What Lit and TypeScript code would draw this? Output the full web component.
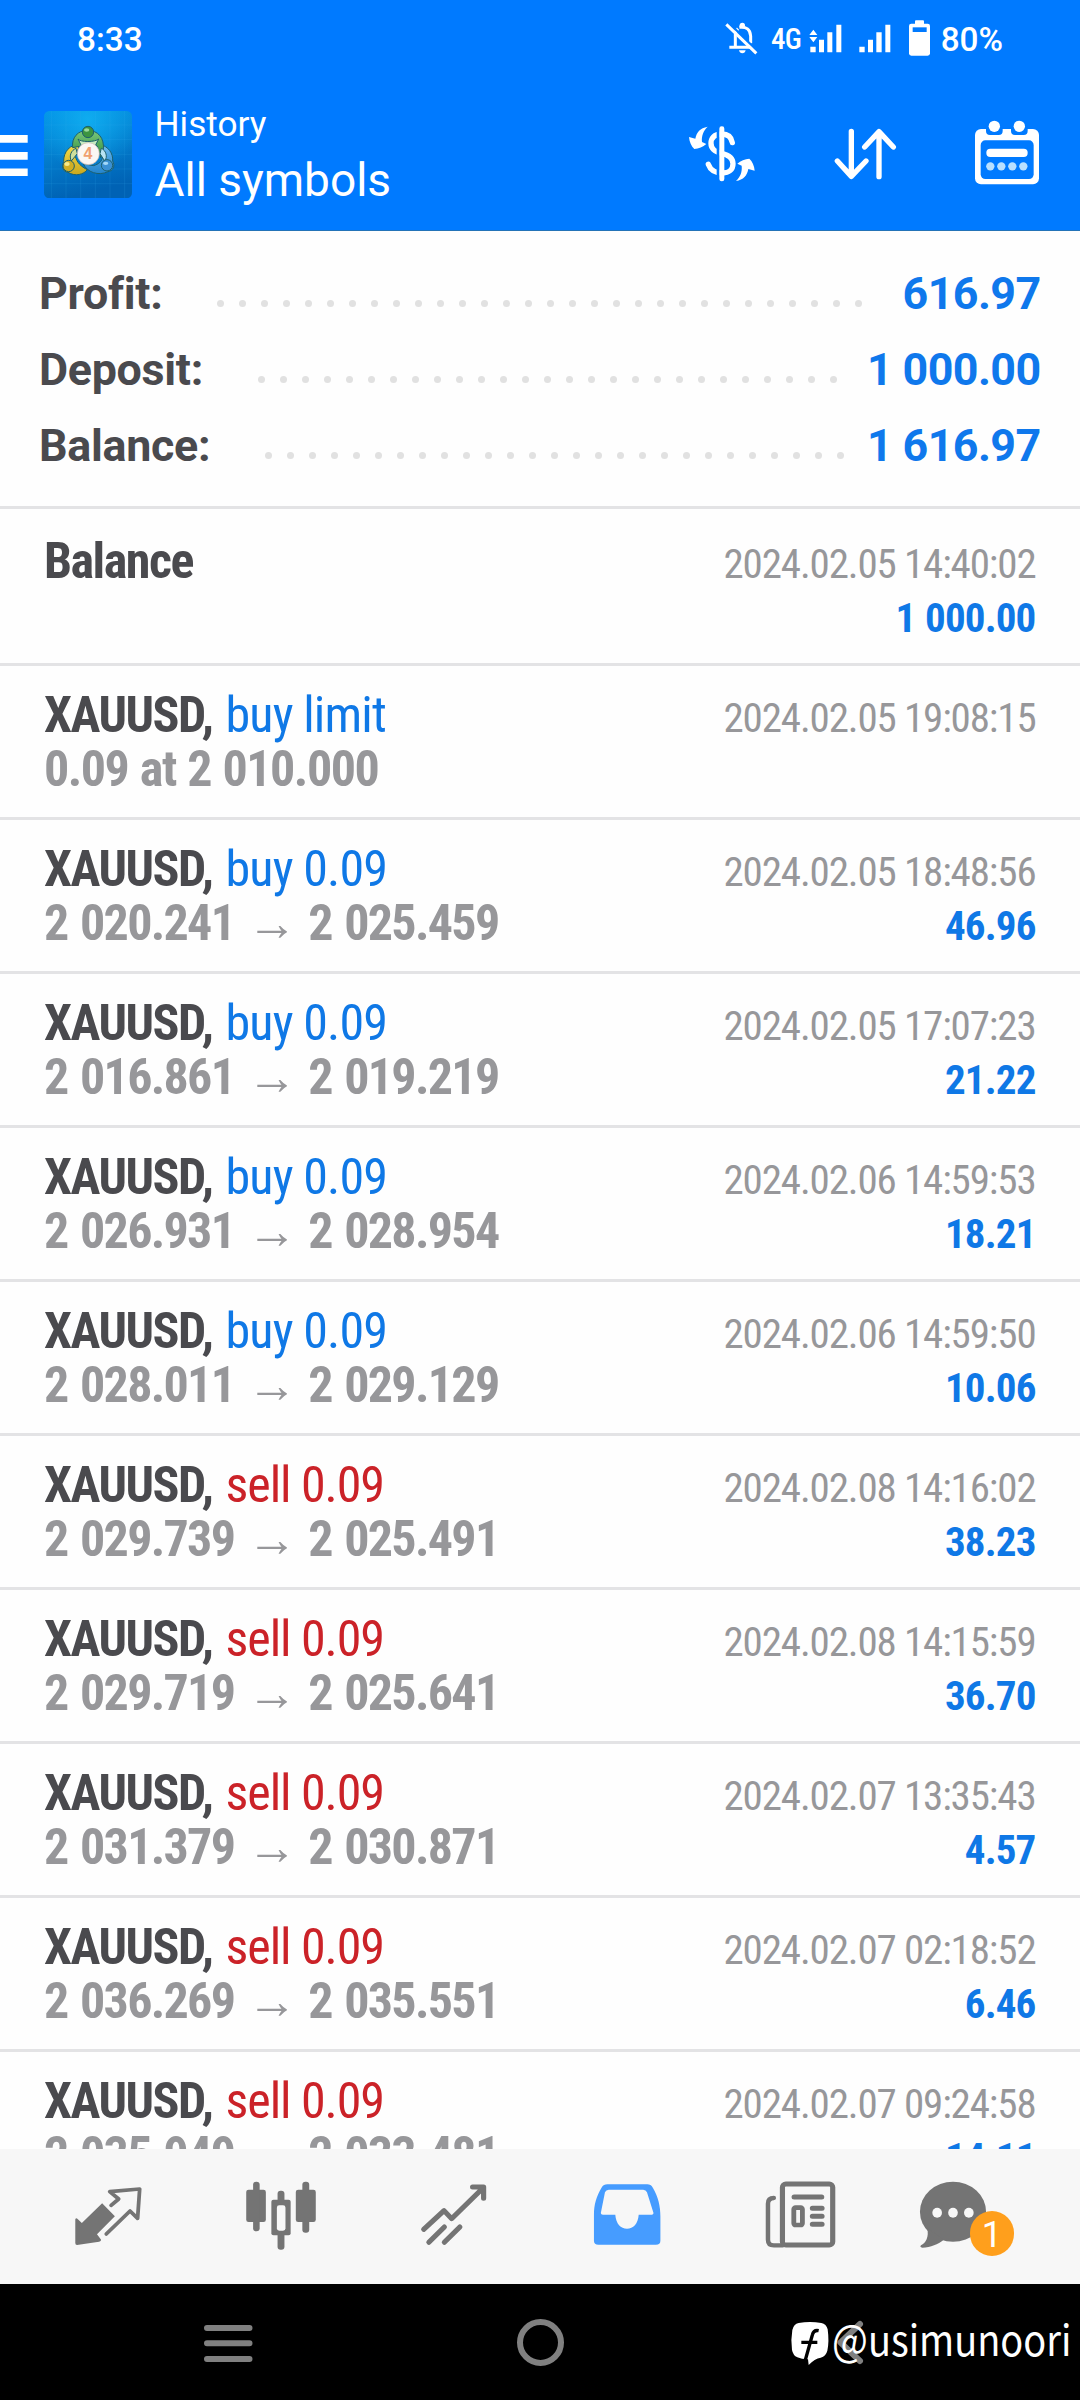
import { LitElement, html, css, svg, nothing } from "lit";
import { customElement, property } from "lit/decorators.js";

interface Deal {
  title: string;
  kind?: "buy" | "sell";
  action?: string;
  open?: string;
  close?: string;
  note?: string;
  time: string;
  value?: string;
}

const trade = (kind: "buy" | "sell", open: string, close: string, time: string, value: string): Deal => ({
  title: "XAUUSD,", kind, action: `${kind} 0.09`, open, close, time, value,
});

const deals: Deal[] = [
  { title: "Balance", time: "2024.02.05 14:40:02", value: "1 000.00" },
  { title: "XAUUSD,", kind: "buy", action: "buy limit", note: "0.09 at 2 010.000", time: "2024.02.05 19:08:15" },
  trade("buy", "2 020.241", "2 025.459", "2024.02.05 18:48:56", "46.96"),
  trade("buy", "2 016.861", "2 019.219", "2024.02.05 17:07:23", "21.22"),
  trade("buy", "2 026.931", "2 028.954", "2024.02.06 14:59:53", "18.21"),
  trade("buy", "2 028.011", "2 029.129", "2024.02.06 14:59:50", "10.06"),
  trade("sell", "2 029.739", "2 025.491", "2024.02.08 14:16:02", "38.23"),
  trade("sell", "2 029.719", "2 025.641", "2024.02.08 14:15:59", "36.70"),
  trade("sell", "2 031.379", "2 030.871", "2024.02.07 13:35:43", "4.57"),
  trade("sell", "2 036.269", "2 035.551", "2024.02.07 02:18:52", "6.46"),
  trade("sell", "2 035.949", "2 033.481", "2024.02.07 09:24:58", "14.11"),
];

const totals = [
  { label: "Profit:", dots: 30, value: "616.97" },
  { label: "Deposit:", dots: 27, value: "1 000.00" },
  { label: "Balance:", dots: 27, value: "1 616.97" },
];

@customElement("status-bar")
export class StatusBar extends LitElement {
  static styles = css`
    :host { display: flex; align-items: flex-start; height: 80px; padding-left: 77px; box-sizing: border-box; color: #fff; font: 500 33.3px/79px Roboto, sans-serif; }
    .clock { width: 643px; }
    svg { display: block; height: 40px; margin-top: 18px; fill: #fff; flex: none; }
    .bell { width: 45px; }
    .net { width: 32px; margin: 0 2.7px 0 6px; font: 500 29px/78px "Roboto Condensed", Roboto, sans-serif; letter-spacing: -0.8px; }
    .signal { width: 90px; }
    .battery { width: 30px; margin: 18px 6px 0 9px; }
    .slash { fill: none; stroke: #fff; stroke-width: 9; }
    .cut { stroke: #007aff; stroke-width: 7; }
    .hole { fill: #007aff; }
  `;
  render() {
    return html`
      <span class="clock">8:33</span>
      <svg class="bell" viewBox="240 54 135 120">
        <path class="slash" d="M268 142H338M286 142V103Q287 93 294 86M298 82Q330 78 332 108V130" />
        <circle cx="307" cy="76" r="8" />
        <path d="M297 151H317Q315 160 307 160Q299 160 297 151Z" />
        <path class="cut" d="M267 69L356 157" />
        <path class="slash" d="M259 73L349 160" />
      </svg>
      <span class="net">4G</span>
      <svg class="signal" viewBox="500 54 270 120">
        <path d="M510 105L522 89L534 105ZM510 111H534L522 127Z" />
        <path d="M513 140h16v17h-16zM539 119h15v38h-15zM564 97h15v60h-15zM591 74h15v83h-15z" />
        <path d="M660 140h16v17h-16zM686 119h15v38h-15zM711 97h16v60h-16zM738 74h15v83h-15z" />
      </svg>
      <svg class="battery" viewBox="795 54 90 120">
        <rect x="825" y="61" width="27" height="16" rx="3" />
        <rect x="807" y="71" width="63" height="96" rx="7" />
        <rect class="hole" x="818" y="82" width="42" height="14" />
      </svg>
      <span>80%</span>
    `;
  }
}

@customElement("app-bar")
export class AppBar extends LitElement {
  static styles = css`
    :host { display: flex; align-items: flex-start; height: 151px; box-sizing: border-box; color: #fff; border-bottom: 1px solid #2373b8; font-family: Roboto, sans-serif; }
    svg { display: block; flex: none; fill: #fff; }
    .menu { width: 27.7px; height: 41px; margin-top: 55px; }
    .logo { width: 88px; height: 87.3px; margin: 30.6px 0 0 16.3px; }
    .titles { flex: 1; margin: 18px 0 0 22.5px; }
    .section { font-size: 35.2px; line-height: 52px; }
    .scope { font-size: 46px; line-height: 60px; }
    .tool { height: 90px; margin-top: 30px; }
    .sort { margin-left: 56.7px; }
    .calendar { margin: 30px 33.3px 0 63.3px; }
    .line { fill: none; stroke: #fff; stroke-linecap: round; stroke-linejoin: round; }
    .gap { fill: #007aff; }
    .four { font: 700 48px "Liberation Sans", sans-serif; fill: #f0a070; text-anchor: middle; }
  `;
  render() {
    return html`
      <svg class="menu" viewBox="0 0 27.7 41"><path d="M0 0H27.7V7.8H0ZM0 17H27.7V24.8H0ZM0 33.4H27.7V41H0Z" /></svg>
      <svg class="logo" viewBox="132 32 264 262">
        <defs>
          <linearGradient id="sky" x1="0" y1="0" x2="0.25" y2="1"><stop offset="0" stop-color="#0292e6" /><stop offset="0.35" stop-color="#0486d6" /><stop offset="1" stop-color="#0062b4" /></linearGradient>
          <radialGradient id="glow" cx="0.5" cy="0.1" r="0.6"><stop offset="0" stop-color="#12b4f4" stop-opacity="0.8" /><stop offset="1" stop-color="#12b4f4" stop-opacity="0" /></radialGradient>
          <linearGradient id="g" x1="0" y1="0" x2="0" y2="1"><stop offset="0" stop-color="#7cc77c" /><stop offset="1" stop-color="#2f8f3c" /></linearGradient>
          <linearGradient id="y" x1="0" y1="0" x2="0" y2="1"><stop offset="0" stop-color="#f4dc4a" /><stop offset="1" stop-color="#c9a81e" /></linearGradient>
          <linearGradient id="b" x1="0" y1="0" x2="0" y2="1"><stop offset="0" stop-color="#6cbcf0" /><stop offset="1" stop-color="#2484cc" /></linearGradient>
        </defs>
        <rect x="132" y="32" width="264" height="262" rx="16" fill="url(#sky)" />
        <rect x="132" y="32" width="264" height="262" rx="16" fill="url(#glow)" />
        <path d="M154 32V294M198 32V294M242 32V294M286 32V294M330 32V294M374 32V294M132 74H396M132 118H396M132 162H396M132 206H396M132 250H396" stroke="#3cb0ee" stroke-opacity="0.22" stroke-width="2" />
        <g stroke="#1c5f6c" stroke-width="3">
          <path d="M240 132C210 132 190 154 191 184C184 198 188 214 204 216C226 230 252 222 262 208C244 200 230 186 226 168Z" fill="url(#y)" />
          <path d="M300 132C324 138 340 158 338 182C346 196 340 212 324 214C296 228 260 216 250 190L280 196C296 192 306 184 308 168Z" fill="url(#b)" />
          <path d="M218 142C214 112 234 90 262 90C294 90 314 112 310 150L302 172L292 138C280 122 252 122 240 138Z" fill="url(#g)" />
          <path d="M214 182C206 166 214 150 228 144L232 160Z" fill="#cfdf9c" />
          <path d="M314 182C324 170 318 150 304 144L300 160Z" fill="#b8e4f4" />
          <path d="M234 116C240 126 286 126 296 116L286 136H244Z" fill="#c6ecc0" />
          <circle cx="264" cy="95" r="17" fill="#3c9440" />
          <circle cx="206" cy="197" r="17" fill="#d0ae24" />
          <circle cx="321" cy="195" r="17" fill="#3a90d4" />
        </g>
        <ellipse cx="260" cy="89" rx="8" ry="5" fill="#9ad89a" />
        <ellipse cx="201" cy="191" rx="8" ry="6" fill="#f6ea8c" />
        <ellipse cx="317" cy="189" rx="8" ry="5" fill="#a4d8f8" />
        <circle cx="265" cy="160" r="33" fill="#fbf7f4" stroke="#c8b8b0" stroke-width="2" />
        <text class="four" x="264" y="177">4</text>
      </svg>
      <div class="titles">
        <div class="section">History</div>
        <div class="scope">All symbols</div>
      </div>
      <svg class="tool" width="90" viewBox="0 0 270 270">
        <path class="line" stroke-width="16" d="M157 98C154 80 144 72 125 72C102 72 93 86 93 100C93 120 108 126 125 130C146 135 159 144 159 161C159 179 146 189 128 189C103 189 91 180 85 163" />
        <path class="gap" d="M110 55H119V208H110Z" />
        <rect x="118" y="49" width="15" height="165" rx="7" />
        <path d="M83 50C60 54 50 66 46 86L27 81C28 96 34 109 43 117C56 116 69 111 79 102L66 96C64 78 70 62 83 50Z" />
        <path transform="rotate(180 125.500 131.500)" d="M83 50C60 54 50 66 46 86L27 81C28 96 34 109 43 117C56 116 69 111 79 102L66 96C64 78 70 62 83 50Z" />
      </svg>
      <svg class="tool sort" width="76.7" viewBox="560 330 230 270">
        <path class="line" stroke-width="16" d="M633 394V529M591 483L633 529L677 483M716 530V395M673 441L716 395L759 441" />
      </svg>
      <svg class="tool calendar" width="80" viewBox="980 330 240 270">
        <rect x="1004" y="387" width="192" height="166" rx="18" />
        <path class="gap" d="M1037 380H1087V393Q1087 405 1075 405H1049Q1037 405 1037 393ZM1112 380H1162V393Q1162 405 1150 405H1124Q1112 405 1112 393Z" />
        <rect class="gap" x="1021" y="421" width="159" height="116" rx="14" />
        <circle cx="1062" cy="379" r="17" />
        <circle cx="1137" cy="379" r="17" />
        <rect x="1038" y="446" width="124" height="25" rx="12" />
        <g fill="#b9e0ff"><circle cx="1050" cy="499" r="12.500" /><circle cx="1083" cy="499" r="12.500" /><circle cx="1116" cy="499" r="12.500" /><circle cx="1149" cy="499" r="12.500" /></g>
      </svg>
    `;
  }
}

@customElement("account-totals")
export class AccountTotals extends LitElement {
  static styles = css`
    :host { display: block; height: 278px; box-sizing: border-box; padding: 25px 39.5px 0 39px; border-bottom: 3px solid #e3e3e5; font: 700 44.8px/76px Roboto, sans-serif; letter-spacing: -0.3px; }
    .row { display: flex; height: 76px; color: #4a4a4e; }
    .leader { display: flex; gap: 15px; flex: 1; margin: 44px 0 0 55px; }
    .dot { width: 7px; height: 7px; border-radius: 50%; background: #e1e1e1; flex: none; }
    .value { color: #0f78ec; letter-spacing: -0.6px; }
  `;
  render() {
    return totals.map(
      (t) => html`<div class="row">
        <span>${t.label}</span>
        <span class="leader">${Array.from({ length: t.dots }, () => html`<i class="dot"></i>`)}</span>
        <span class="value">${t.value}</span>
      </div>`
    );
  }
}

@customElement("deal-row")
export class DealRow extends LitElement {
  @property({ attribute: false }) deal!: Deal;
  static styles = css`
    :host { display: block; height: 154px; flex: none; box-sizing: border-box; padding: 22px 44.5px 0 44px; border-bottom: 3px solid #e3e3e5; font-family: "Roboto Condensed", Roboto, "Liberation Sans", sans-serif; }
    .line { display: flex; align-items: baseline; height: 54px; font-size: 50px; line-height: 54px; white-space: nowrap; }
    .title { font-weight: 700; color: #4a4a4e; letter-spacing: -1.5px; margin-right: 13px; }
    .action { letter-spacing: -0.85px; }
    .action.buy { color: #0f78e6; }
    .action.sell { color: #cb2228; letter-spacing: -1.05px; }
    .prices { display: flex; align-items: baseline; gap: 11px; font-weight: 700; color: #97979a; letter-spacing: -1.7px; word-spacing: 2.6px; }
    .note { letter-spacing: -1.5px; word-spacing: 1.5px; }
    .arrow { font-family: "Liberation Sans", sans-serif; letter-spacing: 0; font-weight: 700; margin-left: 2px; }
    .time, .value { margin-left: auto; font-size: 41px; line-height: 60px; }
    .time { color: #97979a; letter-spacing: -1.13px; }
    .value { color: #0f78e6; font-weight: 700; letter-spacing: -0.85px; word-spacing: 1px; }
  `;
  render() {
    const d = this.deal;
    return html`
      <div class="line">
        <span class="title">${d.title}</span>
        ${d.action ? html`<span class="action ${d.kind}">${d.action}</span>` : nothing}
        <span class="time">${d.time}</span>
      </div>
      <div class="line">
        ${d.open ? html`<span class="prices"><span>${d.open}</span><span class="arrow">→</span><span>${d.close}</span></span>` : nothing}
        ${d.note ? html`<span class="prices note">${d.note}</span>` : nothing}
        ${d.value ? html`<span class="value">${d.value}</span>` : nothing}
      </div>
    `;
  }
}

const tabIcons = [
  { x: 183.3, art: svg`<path d="M297 491L334 530L282 584L294 600Q294 604 288 606L224 616Q219 616 219 610V539Q221 533 225 537L238 550Z"/><path class="o" stroke-width="11" d="M323 497L345 478L319 456L406 448L400 536L378 514L309 583"/>` },
  { x: 685.3, art: svg`<rect x="715" y="450" width="57" height="97" rx="7"/><rect x="735" y="426" width="19" height="149" rx="9"/><rect x="806" y="453" width="20" height="177" rx="9"/><rect x="788" y="480" width="56" height="107" rx="6"/><rect class="paper" x="804" y="497" width="25" height="76" rx="7"/><rect x="859" y="450" width="58" height="97" rx="7"/><rect x="878" y="426" width="20" height="153" rx="9"/>` },
  { x: 1188.3, art: svg`<path class="o" stroke-width="15" d="M1231 569L1290 513L1312 537L1404 444M1373 442H1405V476M1246 608L1291 562M1291 608L1336 562"/>` },
  { x: 123.3, art: svg`<path fill="#469cff" fill-rule="evenodd" d="M197 434H313Q323 434 329 444C345 472 351 500 351 530V603Q351 615 338 615H171Q158 615 158 603V525C158 495 165 470 180 444Q186 434 197 434ZM201 450Q193 450 190 458L178 520Q178 525 184 525H220C222 552 236 567 254 567C272 567 286 552 288 525H326Q331 525 331 520L312 458Q309 450 301 450Z"/>` },
  { x: 625.3, art: svg`<path class="o" stroke-width="13" d="M680 475Q663 475 663 492V600Q663 617 680 617H706"/><rect class="o" stroke-width="15" x="705" y="433" width="146" height="183" rx="10"/><path class="o" stroke-width="15" d="M739 472H819M792 506H820M792 530H820M792 554H820"/><rect class="o" stroke-width="14" x="738" y="504" width="25" height="52" rx="5"/>` },
  { x: 1068.3, art: svg`<ellipse cx="1199" cy="516" rx="96" ry="90"/><path d="M1124 565C1130 592 1120 610 1106 617Q1101 623 1110 624C1135 622 1155 614 1172 600Z"/><g class="paper"><ellipse cx="1153" cy="519" rx="14" ry="15"/><ellipse cx="1199" cy="519" rx="14" ry="15"/><ellipse cx="1245" cy="519" rx="14" ry="15"/></g>` },
];

@customElement("tab-bar")
export class TabBar extends LitElement {
  static styles = css`
    :host { display: flex; height: 135px; box-sizing: border-box; padding: 27px 21px 0; background: #f7f7f7; }
    .tab { width: 173px; flex: none; display: flex; justify-content: center; position: relative; }
    .tab:last-child svg { margin-right: 40px; }
    svg { display: block; width: 90px; height: 80px; fill: #747474; flex: none; }
    .o { fill: none; stroke: #747474; stroke-linecap: round; stroke-linejoin: round; }
    .paper { fill: #f7f7f7; }
    .badge { position: absolute; left: 83.5px; top: 35px; width: 44.5px; height: 44.5px; border-radius: 50%; background: #ff9f1c; color: #fff; font: 400 36px/48px "Roboto", sans-serif; text-align: center; }
  `;
  render() {
    return tabIcons.map(
      (t, i) => html`<div class="tab">
        <svg viewBox="${t.x} 409 261.4 240" preserveAspectRatio="none">${t.art}</svg>
        ${i === 5 ? html`<span class="badge">1</span>` : nothing}
      </div>`
    );
  }
}

@customElement("system-nav")
export class SystemNav extends LitElement {
  static styles = css`
    :host { display: flex; align-items: flex-start; height: 116px; box-sizing: border-box; padding: 32px 72px 0; background: #000; position: relative; }
    .key { width: 312px; height: 52px; flex: none; display: block; fill: none; stroke: #808080; stroke-width: 6; stroke-linecap: round; stroke-linejoin: round; }
    .mark { position: absolute; left: 790px; top: 36px; display: flex; color: #fff; }
    .mark svg { width: 40px; height: 46.7px; display: block; }
    .handle { font: 400 43px/46px "Noto Sans CJK SC", sans-serif; transform: scaleX(0.882); transform-origin: 0 0; margin: -6px 0 0 1.5px; height: 46px; }
  `;
  render() {
    return html`
      <svg class="key" viewBox="0 0 312 52"><path d="M135 12H177.500M135 27.300H177.500M135 43H177.500" /></svg>
      <svg class="key" viewBox="0 0 312 52"><circle cx="156.500" cy="26.500" r="20.500" /></svg>
      <svg class="key" viewBox="0 0 312 52"><path d="M164 8L144.500 26.500L164 45" /></svg>
      <div class="mark">
        <svg viewBox="30 60 120 140">
          <path fill="#fff" d="M56 69Q90 63 124 69Q139 72 143 88Q148 125 142 152Q138 168 122 173Q104 176 86 195L84 178Q64 178 52 172Q39 166 36 150Q32 118 37 90Q41 72 56 69Z" />
          <path fill="none" stroke="#000" stroke-width="10" d="M116 92Q101 89 97 105L76 180M64 127H112" />
        </svg>
        <span class="handle">@usimunoori</span>
      </div>
    `;
  }
}

@customElement("app-root")
export class AppRoot extends LitElement {
  static styles = css`
    :host { display: flex; flex-direction: column; width: 1080px; height: 2400px; overflow: hidden; background: #fefefe; }
    .top { background: #007aff; flex: none; }
    account-totals, tab-bar, system-nav { flex: none; }
    .deals { flex: 1; min-height: 0; overflow: hidden; display: flex; flex-direction: column; }
    .deals deal-row:first-child { height: 157px; padding-top: 25px; }
  `;
  render() {
    return html`
      <header class="top"><status-bar></status-bar><app-bar></app-bar></header>
      <account-totals></account-totals>
      <main class="deals">${deals.map((d) => html`<deal-row .deal=${d}></deal-row>`)}</main>
      <tab-bar></tab-bar>
      <system-nav></system-nav>
    `;
  }
}
